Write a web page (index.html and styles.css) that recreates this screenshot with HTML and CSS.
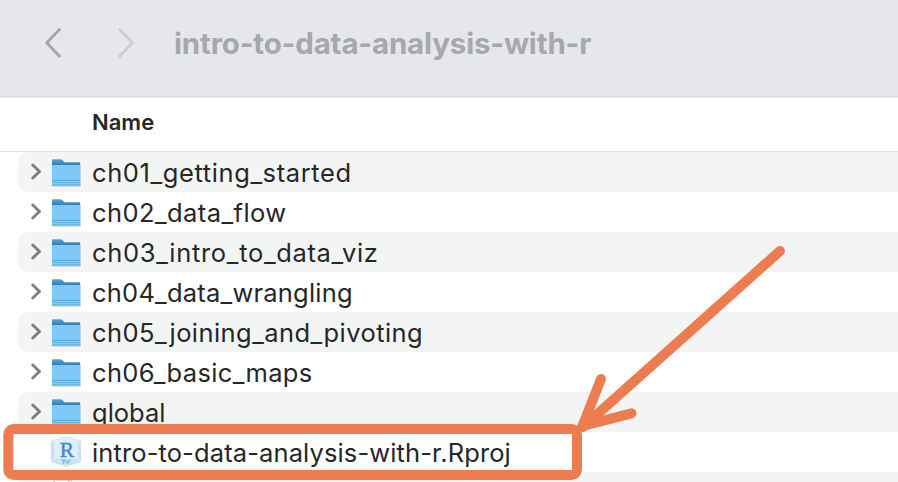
FILE: index.html
```html
<!DOCTYPE html>
<html lang="en">
<head>
<meta charset="utf-8">
<title>intro-to-data-analysis-with-r</title>
<link rel="stylesheet" href="styles.css">
</head>
<body>
<svg class="defs" aria-hidden="true">
  <defs>
    <linearGradient id="back" x1="0" y1="0" x2="0" y2="1">
      <stop offset="0" stop-color="#5aa3d4"/><stop offset=".24" stop-color="#2f79ba"/><stop offset="1" stop-color="#4a9bd5"/>
    </linearGradient>
    <linearGradient id="front" x1="0" y1="0" x2="0" y2="1">
      <stop offset="0" stop-color="#83c8f4"/><stop offset="1" stop-color="#7acbfa"/>
    </linearGradient>
    <symbol id="chevron" viewBox="0 0 12 18">
      <path d="M2.800 2 9.500 8.500l-6.700 6.500" fill="none" stroke="#7d7e7e" stroke-width="2.900" stroke-linecap="round" stroke-linejoin="round"/>
    </symbol>
    <symbol id="folder" viewBox="0 0 32 32">
      <path d="M2.500 29.300h27.500" stroke="#000" stroke-opacity=".22" stroke-width="2.200" stroke-linecap="round"/>
      <path d="M2 28.500V4.500Q2 3.300 3.200 3.300h7.300q1 0 1.800.7l1.800 1.700q.6.600 1.500.6h13.300q1.300 0 1.300 1.300v20.900z" fill="url(#back)"/>
      <path d="M2 10q0-1 1-1h26.300q1 0 1 1V27.700q0 1.500-1.500 1.500H3.500Q2 29.200 2 27.700z" fill="url(#front)"/>
      <path d="M2 24.500h28.300M2.500 28.900h27.300" stroke="#5aa9dc" stroke-width=".9"/>
      <path d="M2 26.500h28.300" stroke="#65b6e8" stroke-width=".8"/>
    </symbol>
  </defs>
</svg>
<main class="window">
  <header class="toolbar">
    <svg class="nav back" viewBox="0 0 20 32"><path d="M17.500 2.500 4.700 15.800l12.800 13.400"/></svg>
    <svg class="nav forward" viewBox="0 0 20 32"><path d="M3.700 2.500 16.500 15.800 3.700 29.200"/></svg>
    <h1 class="title">intro-to-data-analysis-with-r</h1>
  </header>
  <div class="columns"><span class="column-name">Name</span></div>
  <ul class="files">
    <li class="row"><svg class="chevron"><use href="#chevron"/></svg><svg class="icon"><use href="#folder"/></svg><span class="ch01">ch01_getting_started</span></li>
    <li class="row"><svg class="chevron"><use href="#chevron"/></svg><svg class="icon"><use href="#folder"/></svg><span class="ch02">ch02_data_flow</span></li>
    <li class="row"><svg class="chevron"><use href="#chevron"/></svg><svg class="icon"><use href="#folder"/></svg><span class="ch03">ch03_intro_to_data_viz</span></li>
    <li class="row"><svg class="chevron"><use href="#chevron"/></svg><svg class="icon"><use href="#folder"/></svg><span class="ch04">ch04_data_wrangling</span></li>
    <li class="row"><svg class="chevron"><use href="#chevron"/></svg><svg class="icon"><use href="#folder"/></svg><span class="ch05">ch05_joining_and_pivoting</span></li>
    <li class="row"><svg class="chevron"><use href="#chevron"/></svg><svg class="icon"><use href="#folder"/></svg><span class="ch06">ch06_basic_maps</span></li>
    <li class="row"><svg class="chevron"><use href="#chevron"/></svg><svg class="icon"><use href="#folder"/></svg><span>global</span></li>
    <li class="row">
      <span class="chevron"></span>
      <svg class="icon" viewBox="0 0 32 32">
        <path d="M16 .8 30.500 5v20.500L16 30.500 1.500 25.500V5z" fill="#dceef8" stroke="#bdd5e4" stroke-width=".7"/>
        <path d="M16 1 30.500 5.200 27 7 16 4 5 7 1.500 5.200z" fill="#e6f0f5"/>
        <path d="M1.500 5.200 5 7v15l-3.500 3.500zM30.500 5.200 27 7v15l3.500 3.500z" fill="#c9e2f2"/>
        <path d="M5 22h22l3.500 3.500L16 30.500 1.500 25.500z" fill="#cbe4f3"/>
        <path d="M5 7v15L1.500 25.500M27 7v15l3.500 3.500M5 22h22" fill="none" stroke="#e9f6fc" stroke-width=".8"/>
        <text class="r-letter" x="17" y="20.700" text-anchor="middle">R</text>
        <path d="M13.500 24v4M11.500 24h4.500M15 25.500l4 2M20.500 24l-4 2" fill="none" stroke="#8cbcea" stroke-width="1.400"/>
      </svg>
      <span class="project">intro-to-data-analysis-with-r.Rproj</span>
    </li>
    <li class="row">
      <span class="chevron"></span>
      <svg class="icon" viewBox="0 0 32 32"><path d="M4 30V4h16l8 8v18M8 7h10M19 4v9h8" fill="#fff" stroke="#b9b9b9" stroke-width="1"/></svg>
    </li>
  </ul>
  <svg class="callout" viewBox="0 0 898 482">
    <rect x="8.300" y="429" width="568.700" height="46" rx="5.500"/>
    <path d="M780 251 583 427"/>
    <path d="M601 379 582.500 426 631.500 413.300"/>
  </svg>
</main>
</body>
</html>
```
FILE: styles.css
```css
* { box-sizing: border-box; }

body {
  margin: 0;
  background: #fff;
  color: #262726;
  font-family: Inter, "Liberation Sans", sans-serif;
}

.defs { position: absolute; width: 0; height: 0; }

.window {
  position: relative;
  width: 898px;
  height: 482px;
  overflow: hidden;
}

.toolbar {
  display: flex;
  align-items: center;
  height: 97px;
  padding: 0 0 10px 42px;
  background: #e6e7ec;
  border-bottom: 1px solid #d9d9dc;
}

.nav {
  flex: none;
  width: 20px;
  height: 32px;
  fill: none;
  stroke-width: 2.8;
  stroke-linecap: round;
  stroke-linejoin: round;
}
.back { stroke: #a4a5a9; }
.forward { margin-left: 54px; stroke: #cbccd0; }

.title {
  margin: 0 0 0 38px;
  color: #a7a8ac;
  font-size: 29.500px;
  font-weight: 700;
  line-height: 36px;
  letter-spacing: -.17px;
}

.columns {
  display: flex;
  align-items: center;
  height: 55px;
  padding: 0 0 6px 92px;
  border-top: 1px solid #efefef;
  border-bottom: 1px solid #dcdddd;
}
.column-name { font-size: 22px; font-weight: 600; line-height: 28px; }

.files { margin: 0; padding: 0 0 0 18px; list-style: none; }

.row {
  display: flex;
  align-items: center;
  height: 40px;
  padding-left: 12px;
  border-radius: 10px 0 0 10px;
  font-size: 25.500px;
  line-height: 40px;
  white-space: nowrap;
}
.row:nth-child(odd) { background: #f3f5f4; }
.row > span:last-child { padding-top: 2px; }

.ch01 { letter-spacing: .6px; }
.ch02 { letter-spacing: .43px; }
.ch03 { letter-spacing: .68px; }
.ch04 { letter-spacing: .22px; }
.ch05 { letter-spacing: .44px; }
.ch06 { letter-spacing: .34px; }
.project { letter-spacing: .12px; }

.chevron { flex: none; width: 12px; height: 18px; margin-right: 8px; }
.icon { flex: none; width: 32px; height: 32px; margin-right: 10px; }
.r-letter {
  fill: #4385cf;
  stroke: #4385cf;
  stroke-width: .4;
  font: 21.500px "Liberation Serif", serif;
}

.callout {
  position: absolute;
  inset: 0;
  width: 898px;
  height: 482px;
  fill: none;
  stroke: #ed7c50;
  stroke-width: 10;
  stroke-linecap: round;
  stroke-linejoin: miter;
}
```
